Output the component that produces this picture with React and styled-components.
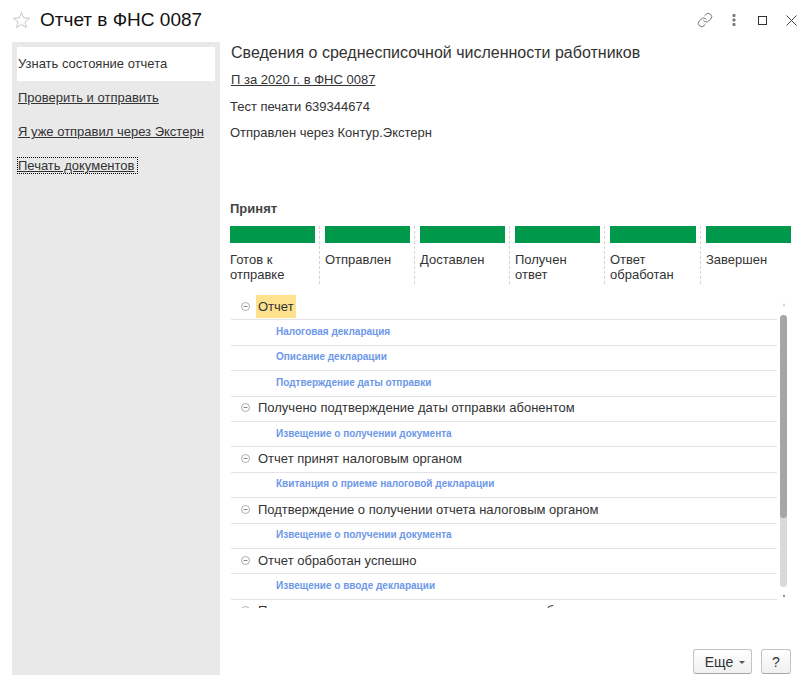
import React from "react";
import styled, { createGlobalStyle } from "styled-components";
import { Link as LinkIcon } from "lucide-react";

const Global = createGlobalStyle`
  html, body { margin: 0; padding: 0; background: #fff; }
  body { font-family: "Liberation Sans", Arial, sans-serif; font-size: 13px; color: #333; }
  * { box-sizing: border-box; }
`;

const Page = styled.div`
  width: 812px;
  height: 687px;
  display: flex;
  flex-direction: column;
  overflow: hidden;
  background: #fff;
`;

const Header = styled.header`
  height: 42px;
  flex: none;
  display: flex;
  align-items: center;
  padding: 0 6px 2px 12px;
`;

const Title = styled.h1`
  margin: 0 0 0 9px;
  font-size: 19px;
  font-weight: 400;
  color: #111;
  flex: 1;
`;

const HeaderTools = styled.div`
  display: flex;
  align-items: center;
  gap: 0;
`;

const ToolSlot = styled.div`
  width: 29px;
  height: 20px;
  display: flex;
  align-items: center;
  justify-content: center;
  color: #555;
`;

const Body = styled.div`
  flex: 1;
  min-height: 0;
  display: flex;
  padding: 0 21px 12px 12px;
`;

const Sidebar = styled.nav`
  width: 208px;
  flex: none;
  background: #e9e9e9;
  padding: 5px;
  display: flex;
  flex-direction: column;
`;

const ActiveItem = styled.div`
  height: 34px;
  background: #fff;
  display: flex;
  align-items: center;
  padding: 0 1px 2px;
  margin-bottom: 8px;
`;

const NavItem = styled.a`
  height: 17px;
  display: inline-flex;
  align-items: center;
  align-self: flex-start;
  padding: 0 ${(p) => (p.$focused ? 3 : 1)}px 0 1px;
  margin-bottom: 17px;
  color: #333;
  text-decoration: underline;
  outline: ${(p) => (p.$focused ? "1px dotted #000" : "none")};
  outline-offset: -1px;
`;

const Main = styled.main`
  flex: 1;
  min-width: 0;
  padding: 1px 0 0 10px;
  display: flex;
  flex-direction: column;
`;

const Heading = styled.div`
  font-size: 16px;
  line-height: 20px;
  padding-left: 1px;
  color: #333;
`;

const DocLink = styled.a`
  margin: 9px 0 0 1px;
  line-height: 16px;
  color: #333;
  text-decoration: underline;
`;

const Line = styled.div`
  line-height: 16px;
  margin-top: ${(p) => p.$top}px;
`;

const Status = styled.div`
  font-weight: 700;
  font-size: 13px;
  line-height: 16px;
  color: #444;
  margin-top: 60px;
`;

const Steps = styled.div`
  display: grid;
  grid-template-columns: 90px 95px 95px 95px 96px 90px;
  margin-top: 9px;
`;

const Step = styled.div`
  height: 58px;
  padding-left: ${(p) => (p.$first ? 0 : 5)}px;
  padding-right: ${(p) => (p.$last ? 0 : 4)}px;
  border-right: ${(p) => (p.$last ? "none" : "1px dashed #d4d4d4")};
`;

const Bar = styled.div`
  height: 17px;
  background: #00984a;
`;

const StepLabel = styled.div`
  margin-top: 9px;
  line-height: 15px;
  color: #333;
`;

const TreeArea = styled.div`
  margin-top: 11px;
  height: 313px;
  display: flex;
`;

const Tree = styled.div`
  width: 546px;
  margin-left: 1px;
  overflow: hidden;
`;

const Row = styled.div`
  height: 25.4px;
  display: flex;
  align-items: center;
  padding-bottom: 2px;
  border-bottom: 1px solid #e4e4e4;
  flex: none;
`;

const GroupToggle = styled.svg`
  width: 9px;
  height: 9px;
  margin-left: 10px;
  flex: none;
`;

const GroupLabel = styled.span`
  margin-left: 6px;
  padding: 0 2px;
  height: 23px;
  line-height: 23px;
  background: ${(p) => (p.$selected ? "#fee28e" : "transparent")};
  color: #333;
`;

const Doc = styled.a`
  margin-left: 45px;
  font-size: 10px;
  font-weight: 700;
  color: #6d98e8;
`;

const ScrollColumn = styled.div`
  width: 13px;
  display: flex;
  flex-direction: column;
  align-items: center;
`;

const Arrow = styled.div`
  width: 0;
  height: 0;
  border-left: 1.5px solid transparent;
  border-right: 1.5px solid transparent;
  ${(p) =>
    p.$up
      ? "border-bottom: 3px solid #bbb; margin-top: 8px;"
      : "border-top: 3px solid #666; margin-top: 8px;"}
`;

const Track = styled.div`
  width: 7px;
  height: 272px;
  margin-top: 9px;
  border-radius: 4px;
  background: #d9d9d9;
`;

const Thumb = styled.div`
  height: 203px;
  border-radius: 4px;
  background: #a6a6a6;
`;

const Footer = styled.div`
  margin-top: auto;
  display: flex;
  justify-content: flex-end;
  gap: 9px;
  margin-bottom: 1px;
`;

const Button = styled.button`
  height: 25px;
  width: ${(p) => p.$w}px;
  border: 1px solid #c4c4c4;
  border-bottom-color: #a8a8a8;
  border-radius: 3px;
  background: linear-gradient(#fff, #f0f0f0);
  font: 14px "Liberation Sans", Arial, sans-serif;
  color: #333;
  padding: 0 0 0 ${(p) => p.$inset || 0}px;
  display: flex;
  align-items: center;
  justify-content: center;
`;

const Caret = styled.span`
  width: 0;
  height: 0;
  margin: 2px 0 0 6px;
  border-left: 3px solid transparent;
  border-right: 3px solid transparent;
  border-top: 3px solid #555;
`;

const Star = () => (
  <svg width="19" height="18" viewBox="0 0 19 18" fill="none" stroke="#c6c6c6" strokeWidth="1">
    <path d="M9.5 1.5 11.7 6.9 17.5 7.3 13 11 14.5 16.6 9.5 13.5 4.5 16.6 6 11 1.5 7.3 7.3 6.9Z" strokeLinejoin="round" />
  </svg>
);

const Dots = () => (
  <svg width="4" height="12" viewBox="0 0 4 12" fill="#777">
    <rect x="0.5" y="0" width="3" height="3" rx="1" />
    <rect x="0.5" y="4.5" width="3" height="3" rx="1" />
    <rect x="0.5" y="9" width="3" height="3" rx="1" />
  </svg>
);

const Square = () => (
  <svg width="9" height="9" viewBox="0 0 9 9" fill="none" stroke="#333" strokeWidth="1">
    <rect x="0.5" y="0.5" width="8" height="8" />
  </svg>
);

const Close = () => (
  <svg width="11" height="11" viewBox="0 0 11 11" fill="none" stroke="#444" strokeWidth="1">
    <path d="M0.5 0.5 10.5 10.5M10.5 0.5 0.5 10.5" />
  </svg>
);

const Toggle = () => (
  <GroupToggle viewBox="0 0 9 9" fill="none" stroke="#aaa" strokeWidth="1">
    <circle cx="4.5" cy="4.5" r="4" />
    <path d="M2.5 4.5H6.5" stroke="#888" />
  </GroupToggle>
);

const steps = [
  ["Готов к", "отправке"],
  ["Отправлен"],
  ["Доставлен"],
  ["Получен", "ответ"],
  ["Ответ", "обработан"],
  ["Завершен"],
];

const rows = [
  { group: "Отчет", selected: true },
  { doc: "Налоговая декларация" },
  { doc: "Описание декларации" },
  { doc: "Подтверждение даты отправки" },
  { group: "Получено подтверждение даты отправки абонентом" },
  { doc: "Извещение о получении документа" },
  { group: "Отчет принят налоговым органом" },
  { doc: "Квитанция о приеме налоговой декларации" },
  { group: "Подтверждение о получении отчета налоговым органом" },
  { doc: "Извещение о получении документа" },
  { group: "Отчет обработан успешно" },
  { doc: "Извещение о вводе декларации" },
  { group: "Получено подтверждение о получении отчета абонентом" },
];

export default function App() {
  return (
    <Page>
      <Global />
      <Header>
        <Star />
        <Title>Отчет в ФНС 0087</Title>
        <HeaderTools>
          <ToolSlot><LinkIcon size={16} strokeWidth={1.2} /></ToolSlot>
          <ToolSlot><Dots /></ToolSlot>
          <ToolSlot><Square /></ToolSlot>
          <ToolSlot><Close /></ToolSlot>
        </HeaderTools>
      </Header>
      <Body>
        <Sidebar>
          <ActiveItem>Узнать состояние отчета</ActiveItem>
          <NavItem>Проверить и отправить</NavItem>
          <NavItem>Я уже отправил через Экстерн</NavItem>
          <NavItem $focused>Печать документов</NavItem>
        </Sidebar>
        <Main>
          <Heading>Сведения о среднесписочной численности работников</Heading>
          <DocLink>П за 2020 г. в ФНС 0087</DocLink>
          <Line $top={11}>Тест печати 639344674</Line>
          <Line $top={10}>Отправлен через Контур.Экстерн</Line>
          <Status>Принят</Status>
          <Steps>
            {steps.map((lines, i) => (
              <Step key={i} $first={i === 0} $last={i === steps.length - 1}>
                <Bar />
                <StepLabel>
                  {lines.map((l) => (
                    <div key={l}>{l}</div>
                  ))}
                </StepLabel>
              </Step>
            ))}
          </Steps>
          <TreeArea>
            <Tree>
              {rows.map((r, i) => (
                <Row key={i}>
                  {r.group ? (
                    <>
                      <Toggle />
                      <GroupLabel $selected={r.selected}>{r.group}</GroupLabel>
                    </>
                  ) : (
                    <Doc>{r.doc}</Doc>
                  )}
                </Row>
              ))}
            </Tree>
            <ScrollColumn>
              <Arrow $up />
              <Track>
                <Thumb />
              </Track>
              <Arrow />
            </ScrollColumn>
          </TreeArea>
          <Footer>
            <Button $w={59} $inset={5}>Еще<Caret /></Button>
            <Button $w={30}>?</Button>
          </Footer>
        </Main>
      </Body>
    </Page>
  );
}
